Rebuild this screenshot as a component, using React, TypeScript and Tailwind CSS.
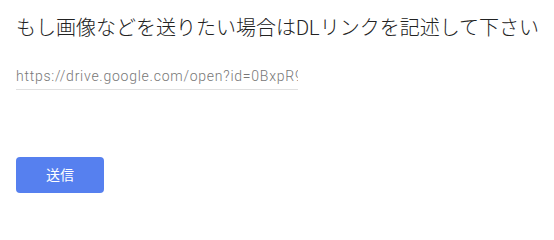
import { useState } from "react";

export default function App() {
  const [link, setLink] = useState("https://drive.google.com/open?id=0BxpR9abcdEFghIJ");

  return (
    <div className="w-[554px] h-[210px] bg-white px-4 pt-[14px] font-['Roboto','Noto_Sans_CJK_JP',sans-serif]">
      <h2 className="text-[20px] leading-[28px] font-light text-[#222] whitespace-nowrap">
        もし画像などを送りたい場合はDLリンクを記述して下さい
      </h2>

      <div className="mt-[20px] w-[282px]">
        <input
          type="text"
          value={link}
          onChange={(e) => setLink(e.target.value)}
          className="block w-full h-[28px] p-0 text-[14px] tracking-[0.75px] font-light text-[#777] bg-transparent border-0 border-b border-[#e0e0e0] outline-none"
        />
      </div>

      <button className="mt-[67px] w-[88px] h-[36px] rounded-[4px] bg-[#5680ef] text-white text-[14px] font-normal flex items-center justify-center">
        送信
      </button>
    </div>
  );
}
